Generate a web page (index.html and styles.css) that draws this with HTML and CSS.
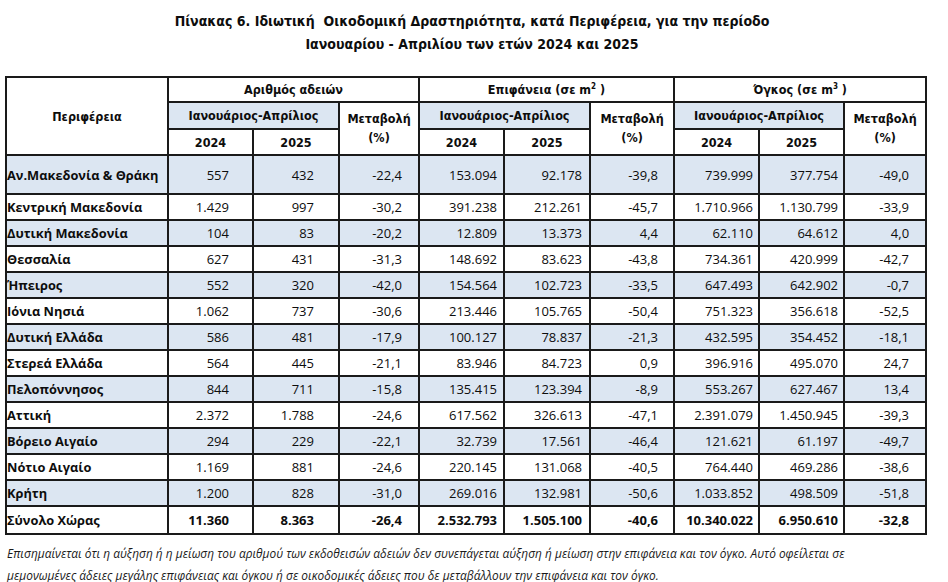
FILE: index.html
```html
<!DOCTYPE html>
<html lang="el">
<head>
<meta charset="utf-8">
<title>Πίνακας 6</title>
<link rel="stylesheet" href="styles.css">
</head>
<body>
<div class="page">
  <h1 class="title">
    <span class="title-line">Πίνακας 6. Ιδιωτική&nbsp; Οικοδομική Δραστηριότητα, κατά Περιφέρεια, για την περίοδο</span>
    <span class="title-line">Ιανουαρίου - Απριλίου των ετών 2024 και 2025</span>
  </h1>
  <table class="data">
    <colgroup>
      <col class="c-region">
      <col class="c-n1"><col class="c-n2"><col class="c-p1">
      <col class="c-a1"><col class="c-a2"><col class="c-p2">
      <col class="c-v1"><col class="c-v2"><col class="c-p3">
    </colgroup>
    <thead>
      <tr class="h1">
        <th rowspan="3" class="hd">Περιφέρεια</th>
        <th colspan="3" class="hd">Αριθμός αδειών</th>
        <th colspan="3" class="hd">Επιφάνεια (σε m<sup>2</sup> )</th>
        <th colspan="3" class="hd">Όγκος (σε m<sup>3</sup> )</th>
      </tr>
      <tr class="h2">
        <th colspan="2" class="hd blue">Ιανουάριος-Απρίλιος</th>
        <th rowspan="2" class="hd chg">Μεταβολή<br>(%)</th>
        <th colspan="2" class="hd blue">Ιανουάριος-Απρίλιος</th>
        <th rowspan="2" class="hd chg">Μεταβολή<br>(%)</th>
        <th colspan="2" class="hd blue">Ιανουάριος-Απρίλιος</th>
        <th rowspan="2" class="hd chg">Μεταβολή<br>(%)</th>
      </tr>
      <tr class="h3">
        <th class="hd">2024</th><th class="hd">2025</th>
        <th class="hd">2024</th><th class="hd">2025</th>
        <th class="hd">2024</th><th class="hd">2025</th>
      </tr>
    </thead>
    <tbody>
      <tr class="blue first"><th>Αν.Μακεδονία &amp; Θράκη</th><td class="n1">557</td><td class="n2">432</td><td class="p1">-22,4</td><td class="a1">153.094</td><td class="a2">92.178</td><td class="p2">-39,8</td><td class="v1">739.999</td><td class="v2">377.754</td><td class="p3">-49,0</td></tr>
      <tr><th>Κεντρική Μακεδονία</th><td class="n1">1.429</td><td class="n2">997</td><td class="p1">-30,2</td><td class="a1">391.238</td><td class="a2">212.261</td><td class="p2">-45,7</td><td class="v1">1.710.966</td><td class="v2">1.130.799</td><td class="p3">-33,9</td></tr>
      <tr class="blue"><th>Δυτική Μακεδονία</th><td class="n1">104</td><td class="n2">83</td><td class="p1">-20,2</td><td class="a1">12.809</td><td class="a2">13.373</td><td class="p2">4,4</td><td class="v1">62.110</td><td class="v2">64.612</td><td class="p3">4,0</td></tr>
      <tr><th>Θεσσαλία</th><td class="n1">627</td><td class="n2">431</td><td class="p1">-31,3</td><td class="a1">148.692</td><td class="a2">83.623</td><td class="p2">-43,8</td><td class="v1">734.361</td><td class="v2">420.999</td><td class="p3">-42,7</td></tr>
      <tr class="blue"><th>Ήπειρος</th><td class="n1">552</td><td class="n2">320</td><td class="p1">-42,0</td><td class="a1">154.564</td><td class="a2">102.723</td><td class="p2">-33,5</td><td class="v1">647.493</td><td class="v2">642.902</td><td class="p3">-0,7</td></tr>
      <tr><th>Ιόνια Νησιά</th><td class="n1">1.062</td><td class="n2">737</td><td class="p1">-30,6</td><td class="a1">213.446</td><td class="a2">105.765</td><td class="p2">-50,4</td><td class="v1">751.323</td><td class="v2">356.618</td><td class="p3">-52,5</td></tr>
      <tr class="blue"><th>Δυτική Ελλάδα</th><td class="n1">586</td><td class="n2">481</td><td class="p1">-17,9</td><td class="a1">100.127</td><td class="a2">78.837</td><td class="p2">-21,3</td><td class="v1">432.595</td><td class="v2">354.452</td><td class="p3">-18,1</td></tr>
      <tr><th>Στερεά Ελλάδα</th><td class="n1">564</td><td class="n2">445</td><td class="p1">-21,1</td><td class="a1">83.946</td><td class="a2">84.723</td><td class="p2">0,9</td><td class="v1">396.916</td><td class="v2">495.070</td><td class="p3">24,7</td></tr>
      <tr class="blue"><th>Πελοπόννησος</th><td class="n1">844</td><td class="n2">711</td><td class="p1">-15,8</td><td class="a1">135.415</td><td class="a2">123.394</td><td class="p2">-8,9</td><td class="v1">553.267</td><td class="v2">627.467</td><td class="p3">13,4</td></tr>
      <tr><th>Αττική</th><td class="n1">2.372</td><td class="n2">1.788</td><td class="p1">-24,6</td><td class="a1">617.562</td><td class="a2">326.613</td><td class="p2">-47,1</td><td class="v1">2.391.079</td><td class="v2">1.450.945</td><td class="p3">-39,3</td></tr>
      <tr class="blue"><th>Βόρειο Αιγαίο</th><td class="n1">294</td><td class="n2">229</td><td class="p1">-22,1</td><td class="a1">32.739</td><td class="a2">17.561</td><td class="p2">-46,4</td><td class="v1">121.621</td><td class="v2">61.197</td><td class="p3">-49,7</td></tr>
      <tr><th>Νότιο Αιγαίο</th><td class="n1">1.169</td><td class="n2">881</td><td class="p1">-24,6</td><td class="a1">220.145</td><td class="a2">131.068</td><td class="p2">-40,5</td><td class="v1">764.440</td><td class="v2">469.286</td><td class="p3">-38,6</td></tr>
      <tr class="blue"><th>Κρήτη</th><td class="n1">1.200</td><td class="n2">828</td><td class="p1">-31,0</td><td class="a1">269.016</td><td class="a2">132.981</td><td class="p2">-50,6</td><td class="v1">1.033.852</td><td class="v2">498.509</td><td class="p3">-51,8</td></tr>
      <tr class="total"><th>Σύνολο Χώρας</th><td class="n1">11.360</td><td class="n2">8.363</td><td class="p1">-26,4</td><td class="a1">2.532.793</td><td class="a2">1.505.100</td><td class="p2">-40,6</td><td class="v1">10.340.022</td><td class="v2">6.950.610</td><td class="p3">-32,8</td></tr>
    </tbody>
  </table>
  <p class="note">Επισημαίνεται ότι η αύξηση ή η μείωση του αριθμού των εκδοθεισών αδειών δεν συνεπάγεται αύξηση ή μείωση στην επιφάνεια και τον όγκο. Αυτό οφείλεται σε<br>μεμονωμένες άδειες μεγάλης επιφάνειας και όγκου ή σε οικοδομικές άδειες που δε μεταβάλλουν την επιφάνεια και τον όγκο.</p>
</div>
</body>
</html>
```

FILE: styles.css
```css
html, body {
  margin: 0;
  padding: 0;
  background: #ffffff;
}

.page {
  width: 948px;
  box-sizing: border-box;
  padding: 10px 23px 0 5px;
  color: #0d0d0d;
  font-family: "Open Sans", "Noto Sans", "DejaVu Sans", sans-serif;
}

.title {
  margin: 0 0 20px 0;
  display: flex;
  flex-direction: column;
  align-items: center;
  padding-left: 14px;
  font-family: "DejaVu Sans Condensed", "DejaVu Sans", sans-serif;
  font-stretch: condensed;
  font-weight: bold;
  font-size: 14px;
  line-height: 23px;
  color: #0d0d0d;
}

.data {
  border-collapse: collapse;
  table-layout: fixed;
  width: 920px;
  border: 2px solid #1a1a1a;
  font-size: 13px;
}

.data th,
.data td {
  border: 2px solid #1a1a1a;
  padding: 0;
  overflow: hidden;
  white-space: nowrap;
}

.c-region { width: 162px; }
.c-n1 { width: 85px; }
.c-n2 { width: 86px; }
.c-p1 { width: 80px; }
.c-a1 { width: 85px; }
.c-a2 { width: 86px; }
.c-p2 { width: 84px; }
.c-v1 { width: 85px; }
.c-v2 { width: 85px; }
.c-p3 { width: 82px; }

.hd {
  font-family: "DejaVu Sans Condensed", "DejaVu Sans", sans-serif;
  font-stretch: condensed;
  font-weight: bold;
  font-size: 12.5px;
  text-align: center;
  vertical-align: middle;
  background: #ffffff;
}

.hd sup {
  font-size: 8px;
  line-height: 0;
}

.hd.blue {
  background: #dce6f2;
}

.hd.chg {
  line-height: 19px;
  padding-bottom: 2px;
}

.h1 { height: 25px; }
.h2 { height: 27px; }
.h3 { height: 26px; }

tbody tr { height: 26px; }
tbody tr.first { height: 39px; }
tbody tr.total { height: 28px; }

tbody tr.blue th,
tbody tr.blue td {
  background: #dce6f2;
}

tbody th {
  text-align: left;
  font-weight: bold;
  font-size: 12.8px;
  padding-left: 8px;
}

tbody td {
  text-align: right;
  font-weight: normal;
}

tbody tr.total td {
  font-weight: bold;
}

td.n1 { padding-right: 23px; }
td.n2 { padding-right: 24px; }
td.p1 { padding-right: 16px; }
td.a1 { padding-right: 6px; }
td.a2 { padding-right: 7px; }
td.p2 { padding-right: 15px; }
td.v1 { padding-right: 5px; }
td.v2 { padding-right: 5px; }
td.p3 { padding-right: 16px; }

.note {
  margin: 7px 0 0 2px;
  font-style: italic;
  font-size: 11.9px;
  line-height: 22px;
  color: #1a1a1a;
}
```
